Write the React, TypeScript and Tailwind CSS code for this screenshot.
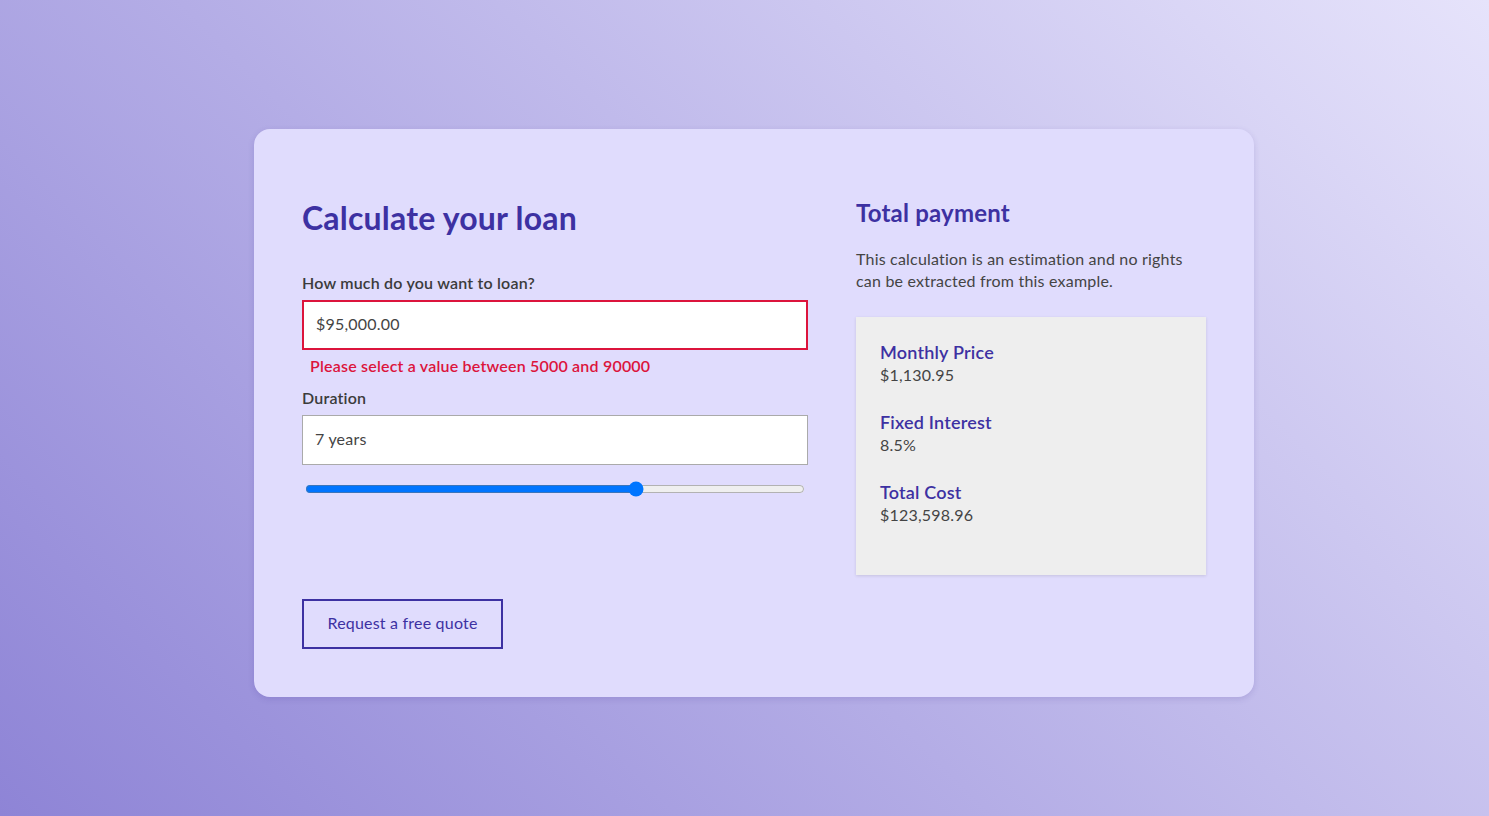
import React from "react";

export default function App() {
  const font = { fontFamily: "Lato, 'Noto Sans', sans-serif" };
  return (
    <div
      className="min-h-[816px] w-full flex items-start justify-center pl-[19px] pt-[129px] bg-[linear-gradient(45deg,#8e84d6,#e6e3fb)] tracking-[0.2px]"
      style={font}
    >
      <div className="w-[1000px] h-[568px] rounded-2xl bg-[#e0dcfd] shadow-[0_2px_6px_rgba(60,40,140,0.15)] p-12 flex gap-12">
        <div className="w-[506px] flex flex-col">
          <h1 className="mt-[21px] text-[32px] leading-[40px] font-bold text-[#3d31a2]">
            Calculate your loan
          </h1>
          <label className="mt-[33px] text-[16px] leading-6 font-semibold text-[#3b3b3b]">
            How much do you want to loan?
          </label>
          <div className="mt-[5px] h-[50px] border-2 border-[#dc143c] bg-white flex items-center px-[12px] pb-[2px] text-[16px] text-[#444]">
            $95,000.00
          </div>
          <div className="mt-1 pl-2 text-[16px] leading-6 font-semibold text-[#dc143c]">
            Please select a value between 5000 and 90000
          </div>
          <label className="mt-2 text-[16px] leading-6 font-semibold text-[#3b3b3b]">
            Duration
          </label>
          <div className="mt-[5px] h-[50px] border border-[#aaaaaa] bg-white flex items-center px-[12px] pb-[2px] text-[16px] text-[#444]">
            7 years
          </div>
          <input
            type="range"
            min={1}
            max={10}
            defaultValue={7}
            className="mt-4 mx-[3px] accent-[#0075ff]"
          />
          <div className="flex-1" />
          <button className="self-start h-[50px] w-[201px] border-2 border-[#3d31a2] pb-[2px] text-[16px] text-[#3d31a2] bg-transparent">
            Request a free quote
          </button>
        </div>
        <div className="w-[350px] flex flex-col">
          <h2 className="mt-[20px] text-[24px] leading-8 font-bold text-[#3d31a2]">
            Total payment
          </h2>
          <p className="mt-[19px] text-[16px] leading-[22px] text-[#444]">
            This calculation is an estimation and no rights can be extracted from this example.
          </p>
          <div className="mt-[25px] h-[258px] bg-[#eeeeee] shadow-[0_1px_3px_rgba(0,0,0,0.12)] pt-[23px] px-6 flex flex-col gap-6">
            {[
              ["Monthly Price", "$1,130.95"],
              ["Fixed Interest", "8.5%"],
              ["Total Cost", "$123,598.96"],
            ].map(([k, v]) => (
              <div key={k} className="flex flex-col">
                <div className="text-[18px] leading-6 font-semibold text-[#3d31a2]">{k}</div>
                <div className="text-[16px] leading-[22px] text-[#444]">{v}</div>
              </div>
            ))}
          </div>
        </div>
      </div>
    </div>
  );
}
